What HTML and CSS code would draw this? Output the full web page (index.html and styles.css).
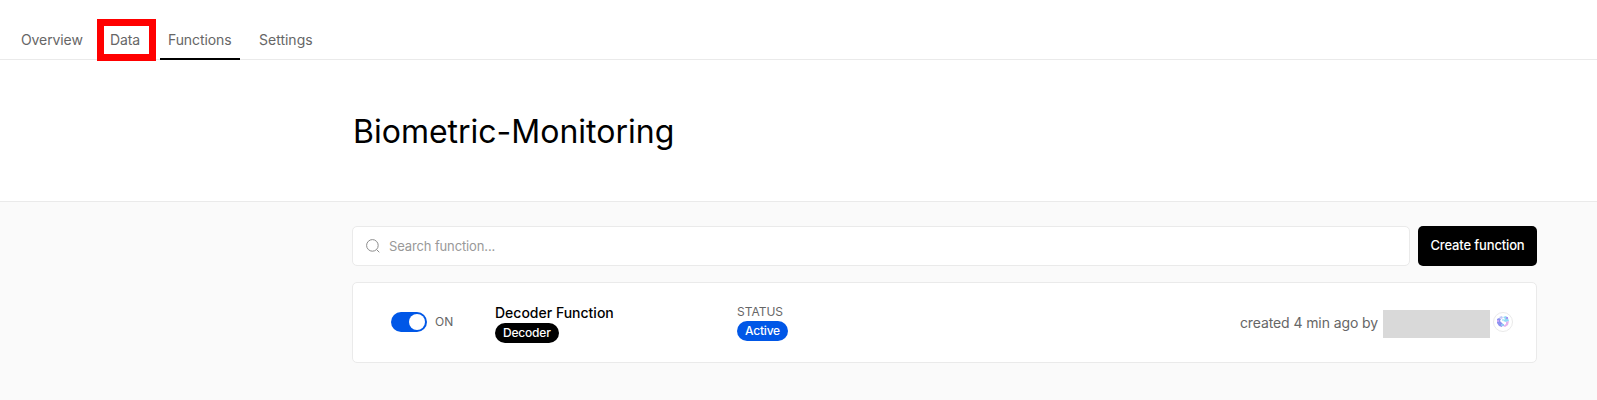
FILE: index.html
```
<!DOCTYPE html>
<html lang="en">
<head>
<meta charset="utf-8">
<title>Biometric-Monitoring</title>
<link rel="stylesheet" href="styles.css">
</head>
<body>
<nav class="tabs">
  <a class="tab overview"><span>Overview</span></a>
  <a class="tab data"><span>Data</span></a>
  <a class="tab functions active"><span>Functions</span></a>
  <a class="tab settings"><span>Settings</span></a>
</nav>
<header class="hero"><h1>Biometric-Monitoring</h1></header>
<main class="content">
  <div class="toolbar">
    <div class="search">
      <svg width="14" height="14" viewBox="0 0 14 14" fill="none" stroke="#8c8c8c"><circle cx="6.4" cy="6.4" r="5.8"/><path d="M10.6 10.6L13.3 13.3"/></svg>
      <span>Search function...</span>
    </div>
    <button class="create">Create function</button>
  </div>
  <section class="card">
    <div class="toggle-group"><span class="toggle"><i class="knob"></i></span><span class="on">ON</span></div>
    <div class="name"><strong>Decoder Function</strong><span class="pill dark">Decoder</span></div>
    <div class="status"><span class="label">STATUS</span><span class="pill blue">Active</span></div>
    <div class="meta">
      <span class="created">created 4 min ago by</span>
      <span class="redacted"></span>
      <span class="avatar">
        <svg width="14" height="14" viewBox="0 0 14 14">
          <path d="M1 4L3 3L5 4L4 6L6 8L7 9L6 12L3 11L1 8Z" fill="#8d92f0"/>
          <path d="M1 5H3V7H1Z" fill="#c4a6f5"/>
          <path d="M3 2L6 1L7 3L5 4Z" fill="#c3c9f8"/>
          <path d="M7 2L10 1L12 3L13 6L10 7L7 6L9 4Z" fill="#93d9f6"/>
          <path d="M6 4H8V6H6Z" fill="#b9ecf8"/>
          <path d="M10 7L13 6L12 10L9 12L7 11L10 9Z" fill="#e3b3ee"/>
          <path d="M5 9H8V11H5Z" fill="#94c8f4"/>
          <path d="M10 2H12V4H10Z" fill="#a596f1"/>
        </svg>
      </span>
    </div>
  </section>
</main>
</body>
</html>
```
FILE: styles.css
```
* { box-sizing: border-box; }
body { margin: 0; height: 400px; overflow: hidden; background: #fafafa; font-family: Inter, sans-serif; font-size: 14px; color: #000; }
.tabs { display: flex; height: 60px; padding: 19px 0 0 8px; background: #fff; border-bottom: 1px solid #eaeaea; color: #666; line-height: 20px; }
.tab { height: 41px; padding-top: 11px; padding-left: 13px; white-space: nowrap; letter-spacing: -0.1px; }
.overview { width: 89px; }
.data { width: 59px; height: 42px; padding-top: 4px; padding-left: 6px; border: 7px solid #f00; }
.functions { width: 80px; margin-left: 4px; padding-left: 8px; border-bottom: 2px solid #000; }
.settings { padding-left: 19px; letter-spacing: 0; }
.hero { height: 142px; padding: 52px 0 0 353px; background: #fff; border-bottom: 1px solid #eaeaea; }
h1 { margin: 0; font-size: 32px; line-height: 40px; font-weight: 400; }
.content { width: 1185px; margin-left: 352px; padding-top: 24px; }
.toolbar { display: flex; gap: 8px; height: 40px; }
.search { flex: 1; display: flex; align-items: center; gap: 9px; padding: 0 0 1px 13px; background: #fff; border: 1px solid #eaeaea; border-radius: 5px; color: #999; font-size: 13px; letter-spacing: -0.13px; }
.create { width: 119px; padding: 0 0 2px; border: 0; border-radius: 5px; background: #000; color: #fff; font: 500 13px Inter, sans-serif; letter-spacing: -0.15px; }
.card { display: flex; height: 81px; margin-top: 16px; padding-right: 23px; background: #fff; border: 1px solid #eaeaea; border-radius: 5px; }
.toggle-group { display: flex; align-items: center; width: 142px; height: 20px; margin-top: 29px; padding-left: 38px; }
.toggle { width: 36px; height: 20px; padding: 2px; border-radius: 10px; background: #0057e7; display: flex; justify-content: flex-end; }
.knob { width: 16px; height: 16px; border-radius: 50%; background: #fff; }
.on { margin-left: 8px; padding-bottom: 2px; font-size: 12px; color: #666; }
.name { width: 242px; padding-top: 20px; display: flex; flex-direction: column; align-items: flex-start; }
.name strong { font-weight: 500; line-height: 20px; }
.pill { height: 20px; padding: 0 8px; border-radius: 10px; color: #fff; font-size: 12px; font-weight: 500; line-height: 20px; letter-spacing: -0.2px; }
.dark { background: #000; }
.blue { background: #0057e7; }
.status { padding-top: 19px; display: flex; flex-direction: column; align-items: flex-start; }
.label { font-size: 12px; line-height: 19px; height: 19px; color: #666; }
.meta { display: flex; align-items: flex-start; margin-left: auto; padding-top: 27px; }
.created { margin-right: 5px; padding-top: 3px; line-height: 20px; color: #666; letter-spacing: -0.1px; }
.redacted { width: 107px; height: 28px; background: #d9d9d9; }
.avatar { display: flex; align-items: center; justify-content: center; width: 20px; height: 20px; margin: 2px 0 0 3px; border: 1px solid #eaeaea; border-radius: 50%; }
```
